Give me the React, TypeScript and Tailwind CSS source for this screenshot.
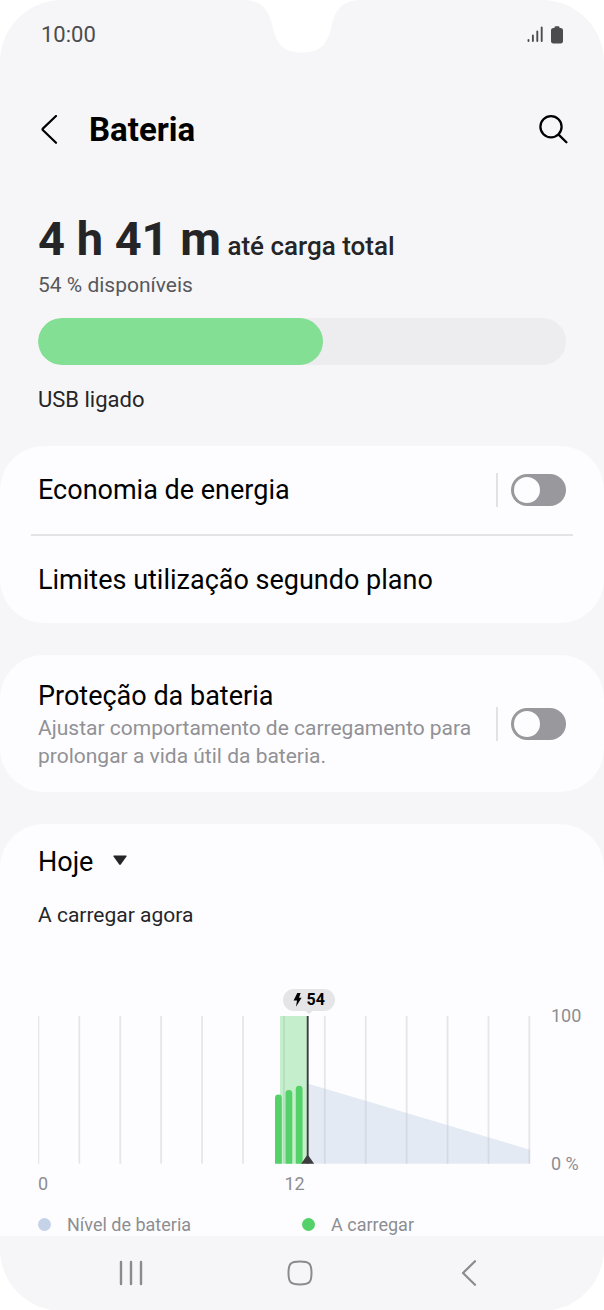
import { useState } from "react";
import type { ReactNode } from "react";

type SwitchProps = { label: string };

function Switch({ label }: SwitchProps) {
  const [on, setOn] = useState(false);
  return (
    <label className="flex items-center border-l-2 border-[#e2e2e5] py-px pl-[13px]">
      <input
        type="checkbox"
        role="switch"
        aria-label={label}
        checked={on}
        onChange={() => setOn(!on)}
        className="peer sr-only"
      />
      <span className="flex h-8 w-[55px] items-center rounded-full bg-[#99989d] p-[3px] peer-checked:justify-end peer-checked:bg-[#55d169]">
        <span className="size-[26px] rounded-full bg-[#fdfdff]" />
      </span>
    </label>
  );
}

function Card({ children }: { children: ReactNode }) {
  return <section className="rounded-[44px] bg-[#fdfdff] px-[38px]">{children}</section>;
}

function StatusBar() {
  return (
    <div className="relative flex h-[70px] items-center justify-between px-[41px] text-[#4c4c4e]">
      <svg
        className="absolute top-0 left-1/2 -translate-x-1/2"
        width="120"
        height="54"
        viewBox="0 0 120 54"
        aria-hidden="true"
      >
        <path
          d="M0 0 C18 0 26 8 30 24 C34 43 40 52.500 60 52.500 C80 52.500 86 43 90 24 C94 8 102 0 120 0 Z"
          fill="#fff"
        />
      </svg>
      <time className="text-[22px] leading-7">10:00</time>
      <div className="flex items-center gap-2">
        <svg width="16" height="18" viewBox="0 0 16 18" stroke="currentColor" strokeWidth="1.900" strokeLinecap="round" aria-hidden="true">
          <path d="M1.500 14v1M5.900 9.500V15M10.300 5.500V15M14.700 1.500V15" />
        </svg>
        <svg width="12" height="18" viewBox="0 0 12 18" fill="currentColor" aria-hidden="true">
          <path d="M3.500 1.200Q3.500.2 4.500.2H7.500Q8.500.2 8.500 1.200V2H10Q12 2.300 12 4V15.600Q12 17.400 10 17.400H2Q0 17.400 0 15.600V4Q0 2.300 2 2H3.500Z" />
        </svg>
      </div>
    </div>
  );
}

const gridLines = [0, 1, 2, 3, 4, 5, 6, 7, 8, 9, 10, 11, 12];

function BatteryChart() {
  return (
    <div className="flex gap-5">
      <div className="min-w-0 flex-1">
        <div className="relative">
          <svg viewBox="0 0 494 148" className="block w-full" role="img" aria-label="Nível de bateria">
            <path d="M271 68L493 134V148H271Z" fill="#e4eaf4" />
            {gridLines.map((n) => (
              <rect key={n} x={n * 41 - 0.500} y="0" width="1.800" height="148" fill="#b9b9c2" fillOpacity="0.350" />
            ))}
            <rect x="242.500" y="0" width="27" height="148" fill="#55d169" fillOpacity="0.340" />
            <g fill="#55d169">
              <path d="M237.500 148V82a3.400 3.400 0 0 1 6.800 0V148Z" />
              <path d="M248 148V77.500a3.400 3.400 0 0 1 6.800 0V148Z" />
              <path d="M258.300 148V73.300a3.400 3.400 0 0 1 6.800 0V148Z" />
            </g>
            <g fill="#3d3d40">
              <rect x="269.300" y="0" width="1.900" height="148" />
              <path d="M263.700 148L268.900 140.500Q270.200 138.500 271.500 140.500L276.700 148Z" />
            </g>
          </svg>
          <div className="absolute bottom-full left-[55%] mb-[5px] flex h-[22px] w-[52px] -translate-x-1/2 items-center justify-center gap-1 rounded-full bg-[#e5e5e7] text-base font-bold text-black">
            <svg width="9" height="14" viewBox="0 0 9 14" aria-hidden="true">
              <path d="M4.300 0H7.600L6 4.800H8.600L3 13.800L4 7.600H.6Z" fill="currentColor" />
            </svg>
            54
            <svg className="absolute top-full left-1/2 -translate-x-1/2" width="7" height="3" viewBox="0 0 7 3" aria-hidden="true">
              <path d="M0 0H7L3.500 3Z" fill="#e5e5e7" />
            </svg>
          </div>
        </div>
        <div className="mt-2 grid grid-cols-2 text-lg leading-6 text-[#8d8d91]">
          <span>0</span>
          <span>12</span>
        </div>
      </div>
      <div className="-mt-3 mb-5 flex w-8 flex-col justify-between text-lg leading-6 whitespace-nowrap text-[#8d8d91]">
        <span>100</span>
        <span>0 %</span>
      </div>
    </div>
  );
}

export default function App() {
  return (
    <div className="min-h-screen bg-white font-['Roboto',sans-serif]">
      <div className="flex min-h-screen flex-col overflow-hidden rounded-[62px] bg-[#f6f6f8]">
        <StatusBar />
        <header className="flex h-[120px] items-center px-9">
          <button type="button" aria-label="Voltar" className="flex w-[53px] pl-1">
            <svg width="20" height="30" viewBox="0 0 20 30" fill="none" stroke="#000" strokeWidth="2.200" strokeLinecap="round" strokeLinejoin="round" aria-hidden="true">
              <path d="M16 1L2.800 13.600Q2.200 14.300 2.800 15L16 27.800" />
            </svg>
          </button>
          <h1 className="text-[33px] leading-10 font-bold text-black">Bateria</h1>
          <button type="button" aria-label="Pesquisar" className="ml-auto">
            <svg width="30" height="30" viewBox="0 0 30 30" fill="none" stroke="#000" strokeWidth="2.300" strokeLinecap="round" aria-hidden="true">
              <circle cx="13" cy="11.800" r="10.600" />
              <path d="M20.600 19.600L28.400 27.300" />
            </svg>
          </button>
        </header>

        <main className="flex flex-1 flex-col gap-8">
          <section className="px-[38px] pt-[19px] text-[#252527]">
            <p className="text-[26px] leading-8 font-medium">
              <strong className="text-[47px] leading-[60px] font-bold">4 h 41 m</strong> até carga total
            </p>
            <p className="text-[21px] leading-8 text-[#58585b]">54 % disponíveis</p>
            <div
              role="progressbar"
              aria-label="Bateria"
              aria-valuenow={54}
              className="mt-[17px] h-[47px] overflow-hidden rounded-full bg-[#ededef]"
            >
              <div className="h-full w-[54%] rounded-full bg-[#82df93]" />
            </div>
            <p className="mt-[21px] text-[22px] leading-7">USB ligado</p>
          </section>

          <Card>
            <div className="flex h-[88px] items-center justify-between text-[27px] leading-8 text-black">
              <h2>Economia de energia</h2>
              <Switch label="Economia de energia" />
            </div>
            <hr className="-mx-[7px] border-t-2 border-[#e4e4e7]" />
            <a href="#limites" className="flex h-[87px] items-center text-[27px] leading-8 text-black">
              Limites utilização segundo plano
            </a>
          </Card>

          <Card>
            <div className="flex items-center justify-between gap-4 pt-[23px] pb-[22px]">
              <div>
                <h2 className="text-[27px] leading-9 text-black">Proteção da bateria</h2>
                <p className="text-[21px] leading-7 text-[#919195]">
                  Ajustar comportamento de carregamento para prolongar a vida útil da bateria.
                </p>
              </div>
              <Switch label="Proteção da bateria" />
            </div>
          </Card>

          <section className="flex-1 rounded-t-[44px] bg-[#fdfdff] pt-5 pr-[21px] pl-[38px]">
            <div className="relative flex w-24 items-center">
              <select
                aria-label="Período"
                className="w-full appearance-none bg-transparent text-[27px] leading-9 text-black"
              >
                <option>Hoje</option>
                <option>Ontem</option>
              </select>
              <svg className="pointer-events-none absolute right-[7px]" width="14" height="14" viewBox="0 0 14 14" aria-hidden="true">
                <path d="M1 .5H13Q14 .5 13.500 1.400L7.800 9.500Q7 10.300 6.200 9.500L.5 1.400Q0 .5 1 .5Z" fill="#252527" />
              </svg>
            </div>
            <p className="mt-[21px] mb-[87px] text-[21px] leading-7 text-[#252527]">A carregar agora</p>
            <BatteryChart />
            <ul className="mt-[18px] mr-[17px] grid grid-cols-2 text-lg leading-[22px] text-[#8d8d91]">
              <li className="flex items-center gap-4">
                <span className="size-[13px] rounded-full bg-[#c5d3e9]" />
                Nível de bateria
              </li>
              <li className="flex items-center gap-4">
                <span className="size-[13px] rounded-full bg-[#55d169]" />
                A carregar
              </li>
            </ul>
          </section>
        </main>

        <nav className="grid h-[75px] grid-cols-3 items-center pr-[50px] pl-[46px] text-[#8b8b8e]">
          <button type="button" aria-label="Recentes" className="flex justify-center">
            <svg width="24" height="26" viewBox="0 0 24 26" stroke="currentColor" strokeWidth="2.400" strokeLinecap="round" aria-hidden="true">
              <path d="M2 2V24M12 2V24M22 2V24" />
            </svg>
          </button>
          <button type="button" aria-label="Início" className="flex justify-center">
            <svg width="26" height="26" viewBox="0 0 26 26" fill="none" stroke="currentColor" strokeWidth="2" aria-hidden="true">
              <path d="M13 1.500C22.500 1.500 24.500 3.500 24.500 13S22.500 24.500 13 24.500S1.500 22.500 1.500 13S3.500 1.500 13 1.500Z" />
            </svg>
          </button>
          <button type="button" aria-label="Voltar" className="flex justify-center">
            <svg width="16" height="26" viewBox="0 0 16 26" fill="none" stroke="currentColor" strokeWidth="2.200" strokeLinecap="round" strokeLinejoin="round" aria-hidden="true">
              <path d="M14 1.200L2 13L14 24.800" />
            </svg>
          </button>
        </nav>
      </div>
    </div>
  );
}
